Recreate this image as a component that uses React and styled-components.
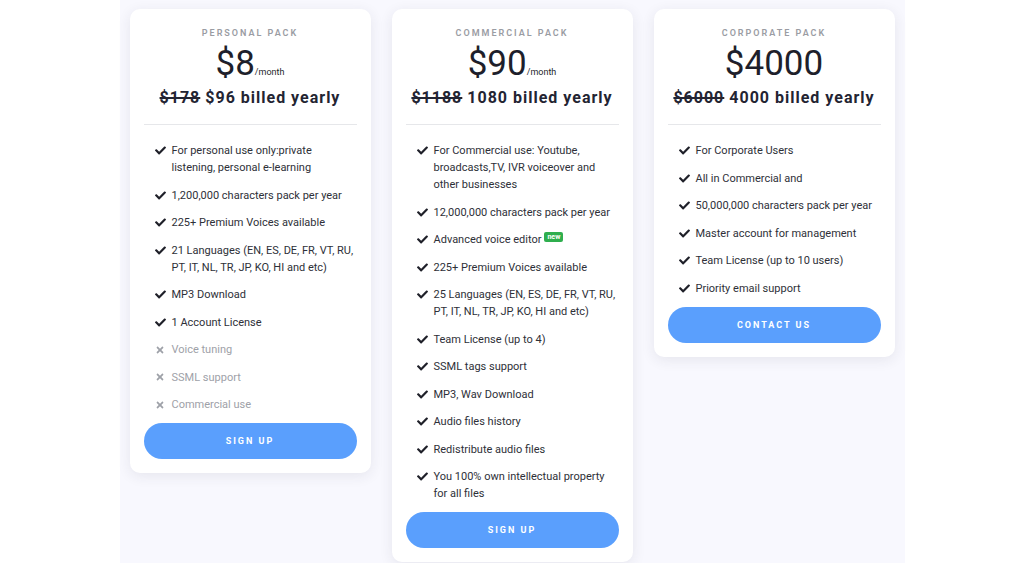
import React from "react";
import styled, { createGlobalStyle } from "styled-components";
import { FaCheck, FaTimes } from "react-icons/fa";

const GlobalStyle = createGlobalStyle`
  body {
    margin: 0;
    background: #ffffff;
    font-family: Roboto, "Liberation Sans", Arial, sans-serif;
  }
`;

const Page = styled.div`
  display: flex;
  justify-content: center;
`;

const Panel = styled.div`
  width: 785px;
  background: #f8f8fe;
  padding: 9px 10px 1px;
  box-sizing: border-box;
  display: flex;
  justify-content: center;
  align-items: flex-start;
  gap: 21px;
`;

const Card = styled.div`
  width: 241px;
  box-sizing: border-box;
  background: #fff;
  border-radius: 10px;
  box-shadow: 0 3px 14px rgba(40, 40, 70, 0.09);
  padding: 19px 14px 14px;
  display: flex;
  flex-direction: column;
`;

const Title = styled.div`
  text-align: center;
  font-size: 9px;
  line-height: 11px;
  font-weight: 600;
  letter-spacing: 2px;
  color: #9a9ca3;
`;

const Price = styled.div`
  margin-top: 5px;
  text-align: center;
  font-size: 35px;
  line-height: 40px;
  color: #1e1f2b;
`;

const Per = styled.span`
  font-size: 9px;
  line-height: 1;
  letter-spacing: 0;
`;

const Billed = styled.div`
  margin-top: 4px;
  text-align: center;
  font-size: 16px;
  line-height: 20px;
  font-weight: 700;
  letter-spacing: 1px;
  color: #232432;
`;

const Old = styled.s`
  text-decoration-thickness: 1.5px;
`;

const Divider = styled.div`
  margin-top: 16px;
  height: 1px;
  background: #e6e7ea;
`;

const List = styled.ul`
  list-style: none;
  margin: 17px 0 0;
  padding: 0 0 0 11px;
  display: flex;
  flex-direction: column;
  gap: 10.5px;
`;

const Item = styled.li`
  display: flex;
  align-items: flex-start;
  font-size: 11px;
  line-height: 17px;
  color: ${({ $off }) => ($off ? "#9ea1a8" : "#2e3038")};
`;

const Mark = styled.span`
  flex: none;
  width: 17px;
  height: 17px;
  display: flex;
  align-items: center;
  color: ${({ $off }) => ($off ? "#9ea1a8" : "#1f2029")};
`;

const New = styled.span`
  display: inline-block;
  margin-left: 3px;
  padding: 0 3px;
  font-size: 7px;
  line-height: 10px;
  font-weight: 700;
  color: #fff;
  background: #2fae4e;
  border-radius: 2px;
  vertical-align: 4px;
`;

const Button = styled.button`
  margin-top: 10px;
  height: 36px;
  border: none;
  border-radius: 18px;
  background: #5a9ffd;
  color: #fff;
  font-family: Roboto, "Liberation Sans", Arial, sans-serif;
  font-size: 9px;
  font-weight: 700;
  letter-spacing: 2px;
  cursor: pointer;
`;

const plans = [
  {
    title: "PERSONAL PACK",
    price: "$8",
    per: true,
    old: "$178",
    billed: "$96 billed yearly",
    button: "SIGN UP",
    features: [
      { text: "For personal use only:private listening, personal e-learning" },
      { text: "1,200,000 characters pack per year" },
      { text: "225+ Premium Voices available" },
      { text: "21 Languages (EN, ES, DE, FR, VT, RU, PT, IT, NL, TR, JP, KO, HI and etc)" },
      { text: "MP3 Download" },
      { text: "1 Account License" },
      { text: "Voice tuning", off: true },
      { text: "SSML support", off: true },
      { text: "Commercial use", off: true },
    ],
  },
  {
    title: "COMMERCIAL PACK",
    price: "$90",
    per: true,
    old: "$1188",
    billed: "1080 billed yearly",
    button: "SIGN UP",
    features: [
      { text: "For Commercial use: Youtube, broadcasts,TV, IVR voiceover and other businesses" },
      { text: "12,000,000 characters pack per year" },
      { text: "Advanced voice editor", isNew: true },
      { text: "225+ Premium Voices available" },
      { text: "25 Languages (EN, ES, DE, FR, VT, RU, PT, IT, NL, TR, JP, KO, HI and etc)" },
      { text: "Team License (up to 4)" },
      { text: "SSML tags support" },
      { text: "MP3, Wav Download" },
      { text: "Audio files history" },
      { text: "Redistribute audio files" },
      { text: "You 100% own intellectual property for all files" },
    ],
  },
  {
    title: "CORPORATE PACK",
    price: "$4000",
    old: "$6000",
    billed: "4000 billed yearly",
    button: "CONTACT US",
    features: [
      { text: "For Corporate Users" },
      { text: "All in Commercial and" },
      { text: "50,000,000 characters pack per year" },
      { text: "Master account for management" },
      { text: "Team License (up to 10 users)" },
      { text: "Priority email support" },
    ],
  },
];

const PlanCard = ({ plan }) => (
  <Card>
    <Title>{plan.title}</Title>
    <Price>
      {plan.price}
      {plan.per && <Per>/month</Per>}
    </Price>
    <Billed>
      <Old>{plan.old}</Old> {plan.billed}
    </Billed>
    <Divider />
    <List>
      {plan.features.map((f) => (
        <Item key={f.text} $off={f.off}>
          <Mark $off={f.off}>
            {f.off ? <FaTimes size={10} /> : <FaCheck size={11} />}
          </Mark>
          <span>
            {f.text}
            {f.isNew && <New>new</New>}
          </span>
        </Item>
      ))}
    </List>
    <Button>{plan.button}</Button>
  </Card>
);

export default function App() {
  return (
    <Page>
      <GlobalStyle />
      <Panel>
        {plans.map((p) => (
          <PlanCard key={p.title} plan={p} />
        ))}
      </Panel>
    </Page>
  );
}
